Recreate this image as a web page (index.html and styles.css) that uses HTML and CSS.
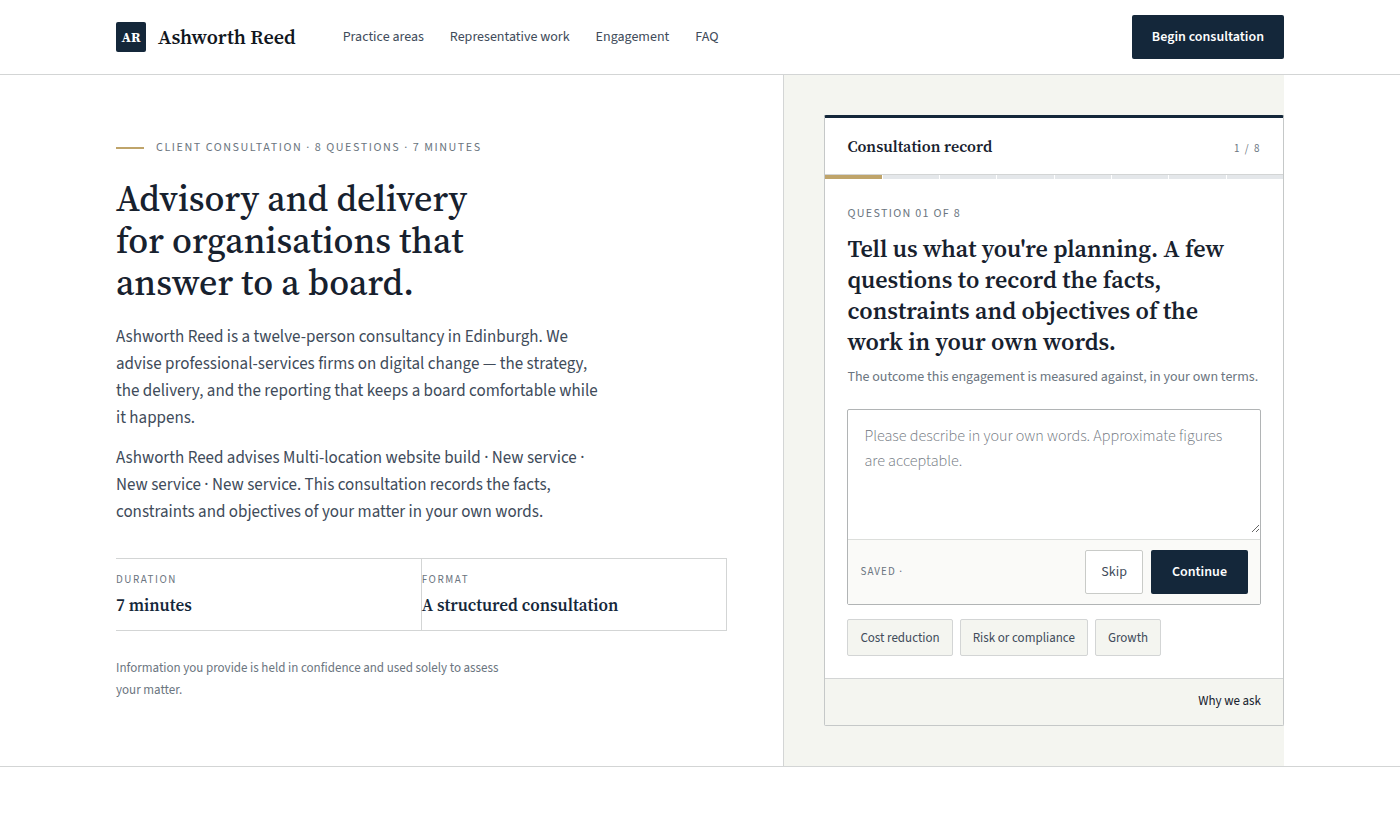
FILE: index.html
```html
<!DOCTYPE html>
<html lang="en">
<head>
    <meta charset="UTF-8">
    <meta name="viewport" content="width=device-width, initial-scale=1">
    <title>Ashworth Reed</title>
    <link rel="stylesheet" href="styles.css">
</head>
<body>
    <header class="site-header">
        <div class="wrap header-inner">
            <a class="brand" href="#">
                <span class="brand-mark">AR</span>
                <span class="brand-name">Ashworth Reed</span>
            </a>
            <nav class="nav">
                <a href="#practice">Practice areas</a>
                <a href="#work">Representative work</a>
                <a href="#engagement">Engagement</a>
                <a href="#faq">FAQ</a>
            </nav>
            <a class="btn btn-primary header-cta" href="#consultation">Begin consultation</a>
        </div>
    </header>

    <main class="hero">
        <div class="wrap hero-grid">
            <section class="intro">
                <p class="label eyebrow">Client consultation · 8 questions · 7 minutes</p>
                <h1>Advisory and delivery for organisations that answer to a board.</h1>
                <p class="lede">Ashworth Reed is a twelve-person consultancy in Edinburgh. We advise professional-services firms on digital change — the strategy, the delivery, and the reporting that keeps a board comfortable while it happens.</p>
                <p class="lede">Ashworth Reed advises Multi-location website build · New service · New service · New service. This consultation records the facts, constraints and objectives of your matter in your own words.</p>
                <dl class="facts">
                    <div class="fact">
                        <dt class="label">Duration</dt>
                        <dd>7 minutes</dd>
                    </div>
                    <div class="fact">
                        <dt class="label">Format</dt>
                        <dd>A structured consultation</dd>
                    </div>
                </dl>
                <p class="note">Information you provide is held in confidence and used solely to assess your matter.</p>
            </section>

            <section class="panel" id="consultation">
                <form class="card">
                    <div class="card-head">
                        <span class="card-title">Consultation record</span>
                        <span class="label">1 / 8</span>
                    </div>
                    <div class="progress">
                        <span class="done"></span>
                        <span></span>
                        <span></span>
                        <span></span>
                        <span></span>
                        <span></span>
                        <span></span>
                        <span></span>
                    </div>
                    <div class="card-body">
                        <p class="label question-no">Question 01 of 8</p>
                        <h2><label for="answer">Tell us what you're planning. A few questions to record the facts, constraints and objectives of the work in your own words.</label></h2>
                        <p class="hint">The outcome this engagement is measured against, in your own terms.</p>
                        <div class="composer">
                            <textarea id="answer" placeholder="Please describe in your own words. Approximate figures are acceptable."></textarea>
                            <div class="composer-foot">
                                <span class="label saved">Saved ·</span>
                                <button type="button" class="btn btn-outline">Skip</button>
                                <button type="button" class="btn btn-primary btn-continue">Continue</button>
                            </div>
                        </div>
                        <div class="chips">
                            <button type="button" class="chip">Cost reduction</button>
                            <button type="button" class="chip">Risk or compliance</button>
                            <button type="button" class="chip">Growth</button>
                        </div>
                    </div>
                    <div class="card-foot">
                        <a href="#why">Why we ask</a>
                    </div>
                </form>
            </section>
        </div>
    </main>
</body>
</html>
```
FILE: styles.css
```css
:root {
    --navy: #14273a;
    --ink: #17212e;
    --text: #404b5a;
    --muted: #6b7580;
    --gold: #bfa46a;
    --line: #d3d5d5;
    --paper: #f4f5f0;
    --sans: "Source Sans 3", "Noto Sans CJK SC", sans-serif;
    --serif: "Source Serif 4", "Noto Serif CJK SC", "Liberation Serif", serif;
}

* {
    box-sizing: border-box;
}

body {
    margin: 0;
    background: #fff;
    color: var(--text);
    font-family: var(--sans);
    font-size: 17px;
    line-height: 27px;
}

h1, h2, p, dl, dd {
    margin: 0;
}

a {
    color: inherit;
    text-decoration: none;
}

.wrap {
    max-width: 1240px;
    margin: 0 auto;
    padding: 0 36px;
}

.label {
    color: var(--muted);
    font-size: 11px;
    line-height: 18px;
    letter-spacing: 0.14em;
    text-transform: uppercase;
}

/* Header */
.site-header {
    border-bottom: 1px solid var(--line);
}

.header-inner {
    display: flex;
    align-items: center;
    min-height: 74px;
}

.brand {
    display: flex;
    align-items: center;
    gap: 12px;
    font-family: var(--serif);
    font-weight: 600;
}

.brand-mark {
    display: grid;
    place-items: center;
    width: 30px;
    height: 30px;
    border-radius: 2px;
    background: var(--navy);
    color: #fff;
    font-size: 14px;
    font-weight: 700;
}

.brand-name {
    color: #11161d;
    font-size: 20px;
}

.nav {
    display: flex;
    gap: 26px;
    margin-left: 47px;
    font-size: 14px;
}

.header-cta {
    margin-left: auto;
}

/* Buttons */
.btn {
    display: inline-flex;
    align-items: center;
    justify-content: center;
    height: 44px;
    padding: 0 20px;
    border: 0;
    border-radius: 2px;
    font-family: inherit;
    font-size: 14px;
    cursor: pointer;
}

.btn-primary {
    background: var(--navy);
    color: #fff;
    font-weight: 600;
}

.btn-outline {
    padding: 0 15px;
    border: 1px solid #c9cbc8;
    background: #fff;
    color: var(--text);
}

.btn-continue {
    padding: 0 21px;
}

/* Hero */
.hero {
    border-bottom: 1px solid var(--line);
}

.hero-grid {
    display: grid;
    grid-template-columns: 4fr 3fr;
}

.intro {
    padding: 64px 56px 64px 0;
}

.eyebrow {
    display: flex;
    align-items: center;
    gap: 12px;
    margin-bottom: 21px;
    font-size: 12px;
    letter-spacing: 0.13em;
}

.eyebrow::before {
    content: "";
    width: 28px;
    height: 2px;
    background: var(--gold);
}

h1, h2 {
    color: var(--ink);
    font-family: var(--serif);
}

h1 {
    max-width: 400px;
    margin-bottom: 20px;
    font-size: 36px;
    font-weight: 500;
    line-height: 42px;
}

.lede {
    max-width: 490px;
    margin-bottom: 13px;
}

.facts {
    display: grid;
    grid-template-columns: 1fr 1fr;
    margin-top: 32px;
    border-top: 1px solid var(--line);
    border-bottom: 1px solid var(--line);
}

.fact {
    padding: 12px 0;
    border-right: 1px solid var(--line);
}

.fact dd {
    margin-top: 4px;
    color: var(--navy);
    font-family: var(--serif);
    font-size: 17px;
    font-weight: 600;
    line-height: 25px;
}

.note {
    max-width: 400px;
    margin-top: 26px;
    color: var(--muted);
    font-size: 13px;
    line-height: 22px;
}

/* Consultation card */
.panel {
    padding: 40px 0 40px 40px;
    border-left: 1px solid var(--line);
    background: var(--paper);
}

.card {
    border: 1px solid #c5c8c8;
    border-top: 3px solid var(--navy);
    border-radius: 2px;
    background: #fff;
}

.card-head {
    display: flex;
    align-items: baseline;
    justify-content: space-between;
    padding: 15px 22px 14px;
    border-bottom: 1px solid var(--line);
}

.card-title {
    color: var(--ink);
    font-family: var(--serif);
    font-size: 16px;
    font-weight: 600;
}

.progress {
    display: grid;
    grid-template-columns: repeat(8, 1fr);
    gap: 1px;
}

.progress span {
    height: 4px;
    background: #e4e7ea;
}

.progress .done {
    background: var(--gold);
}

.card-body {
    padding: 26px 22px 22px;
}

h2 {
    max-width: 400px;
    margin: 10px 0 9px;
    font-size: 24px;
    font-weight: 600;
    line-height: 31px;
}

.question-no {
    font-size: 12px;
    letter-spacing: 0.11em;
}

.hint {
    color: var(--muted);
    font-size: 14px;
    line-height: 22px;
}

.composer {
    margin-top: 21px;
    border: 1px solid #b1b4b5;
    border-radius: 2px;
}

.composer textarea {
    display: block;
    width: 100%;
    height: 123px;
    min-height: 123px;
    padding: 14px 16px;
    margin-bottom: 6px;
    border: 0;
    outline: 0;
    background: transparent;
    color: var(--ink);
    font-family: inherit;
    font-size: 16px;
    font-weight: 300;
    line-height: 25px;
    resize: vertical;
}

.composer textarea::placeholder {
    color: #6f767e;
}

.composer-foot {
    display: flex;
    align-items: center;
    gap: 8px;
    padding: 10px 12px;
    border-top: 1px solid #dcdedb;
    background: #fafaf8;
}

.saved {
    margin-right: auto;
    letter-spacing: 0.1em;
}

.chips {
    display: flex;
    flex-wrap: wrap;
    gap: 7px;
    margin-top: 14px;
}

.chip {
    height: 37px;
    padding: 0 12px;
    border: 1px solid var(--line);
    border-radius: 2px;
    background: var(--paper);
    color: var(--text);
    font-family: inherit;
    font-size: 13px;
    cursor: pointer;
}

.card-foot {
    padding: 11px 22px 12px;
    border-top: 1px solid var(--line);
    background: var(--paper);
    color: var(--ink);
    font-size: 13px;
    line-height: 23px;
    text-align: right;
}
```
